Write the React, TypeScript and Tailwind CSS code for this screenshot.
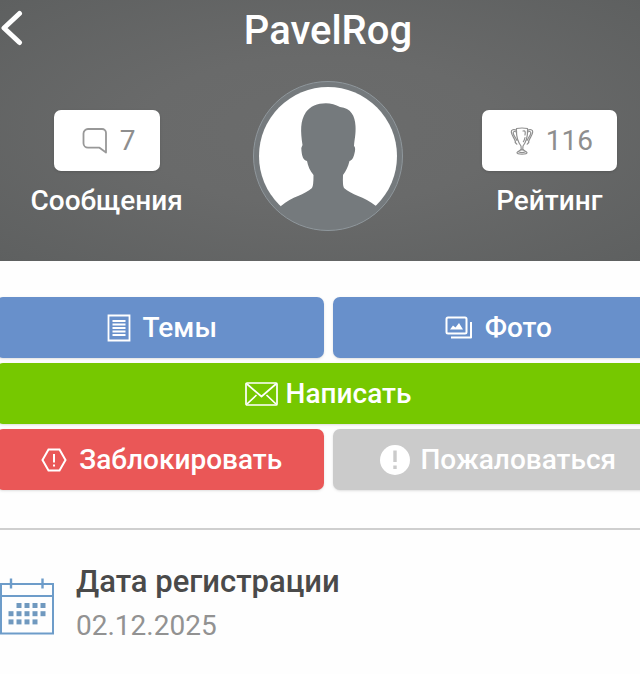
import type { ReactNode } from "react";
import clsx from "clsx";

function BackIcon() {
  return (
    <svg width="24" height="36" viewBox="0 0 24 36" fill="none" stroke="white" strokeWidth="5" strokeLinecap="round" strokeLinejoin="round">
      <path d="M19.5 3.5 4 18l15.500 14.500" />
    </svg>
  );
}

function MessageIcon() {
  return (
    <svg width="26" height="28" viewBox="0 0 26 28" fill="none" stroke="#989898" strokeWidth="1.800" strokeLinejoin="round">
      <path d="M6 2h14a4 4 0 0 1 4 4v19.500l-6.500-4.800H6a4.500 4.500 0 0 1-4.500-4.500V6.500A4.500 4.500 0 0 1 6 2z" />
    </svg>
  );
}

function TrophyIcon() {
  return (
    <svg width="24" height="28" viewBox="0 0 24 28" fill="none" stroke="#8f8f8f" strokeWidth="1.200" strokeLinejoin="round" strokeLinecap="round">
      <path d="M6.500 1.500Q12 .5 17.500 1.500C18 9 16.500 14.500 13 19l-.3 4h-1.400L11 19C7.500 14.500 6 9 6.500 1.500z" />
      <path d="M6.500 3.300C4 2 1 2.500 1.300 5c.3 4 3.500 6 4.200 10.200M5.200 15.500l1.600 1.700M6.600 5C5 4.200 3 4.200 3.200 6c.3 2.500 2.500 4.500 3.800 7.500" />
      <path d="M17.500 3.300c2.500-1.300 5.500-.8 5.200 1.700-.3 4-3.500 6-4.200 10.200M18.800 15.500l-1.600 1.700M17.400 5c1.600-.8 3.600-.8 3.400 1-.3 2.500-2.500 4.500-3.800 7.500" />
      <path d="M13 4c2.500-.8 2.500 1 2 4M15 10.500c-.3 1.500-.8 3-1.600 4.200" />
      <path d="M10.800 22.500c-.5 1.500-3.300 1.500-3.800 3.200 0 1.800 10 1.800 10 0-.5-1.700-3.300-1.700-3.800-3.200M9 25q3 1 6 0" />
    </svg>
  );
}

function TopicsIcon() {
  return (
    <svg width="24" height="28" viewBox="0 0 24 28" fill="none" stroke="white" strokeWidth="1.800">
      <path d="M1.500 1.500h21v25h-21z" />
      <path d="M5.500 7h13M5.500 10.500h13M5.500 14h13M5.500 17.500h13M5.500 21h13" />
    </svg>
  );
}

function PhotoIcon() {
  return (
    <svg width="28" height="24" viewBox="0 0 28 24" fill="none" stroke="white" strokeWidth="2">
      <rect x="1.500" y="1.500" width="20" height="16" rx="1.500" />
      <path d="M26 6v15.500H6" strokeLinejoin="round" />
      <path d="M5 13.500 8 9.500l2.500 2L14 7l4 6.500z" fill="white" stroke="none" />
    </svg>
  );
}

function MailIcon() {
  return (
    <svg width="33" height="24" viewBox="0 0 33 24" fill="none" stroke="white" strokeWidth="1.700" strokeLinejoin="round">
      <rect x="1" y="1" width="31" height="22" rx="1" />
      <path d="M2 2l14.500 12.500L31 2M2 22l9.500-9M31 22l-9.500-9" />
    </svg>
  );
}

function BlockIcon() {
  return (
    <svg width="26" height="24" viewBox="0 0 26 24" fill="none" stroke="white" strokeWidth="2">
      <path d="M7.500 1.500h11L24.500 12l-6 10.500h-11L1.500 12z" />
      <path d="M13 6v8.500M13 16.500v2" />
    </svg>
  );
}

function ComplainIcon() {
  return (
    <svg width="30" height="30" viewBox="0 0 30 30">
      <circle cx="15" cy="15" r="15" fill="white" />
      <path d="M13.300 5.500h3.400v11.500h-3.400zM13.300 20.500h3.400v3.400h-3.400z" fill="#cbcbcb" />
    </svg>
  );
}

const calendarDots = [
  [1, 0], [2, 0], [3, 0], [4, 0],
  [0, 1], [1, 1], [2, 1], [3, 1], [4, 1],
  [0, 2], [1, 2], [2, 2], [3, 2],
];

function CalendarIcon() {
  return (
    <svg width="54" height="57" viewBox="0 0 54 57" fill="none" stroke="#6d9cc9" strokeWidth="2">
      <path d="M1 6h52v49.500H1zM1 18h52" />
      <path d="M11 .5v10M42.500 .5v10" strokeWidth="2.400" />
      {calendarDots.map(([col, row]) => (
        <rect key={`${col}-${row}`} x={8.5 + col * 8} y={25 + row * 8.2} width="5" height="5" fill="#7099bf" stroke="none" />
      ))}
    </svg>
  );
}

function Avatar() {
  return (
    <svg width="150" height="150" viewBox="0 0 150 150" role="img" aria-label="PavelRog">
      <defs>
        <clipPath id="avatar-clip">
          <circle cx="75" cy="75" r="74.500" />
        </clipPath>
      </defs>
      <g clipPath="url(#avatar-clip)">
        <circle cx="75" cy="75" r="75" fill="#757a7d" />
        <circle cx="75" cy="75" r="69" fill="white" />
        <path
          d="M28 125C39 115 52 114 59 107Q60.500 105 60.500 94C57 90 55 85 54 80C50 79 49 75 48.500 70Q48 66 49.500 64C47.500 50 47 40 53 31C59 22 76 19 87 26C98 27 102 35 102.500 45C103 53 101.500 58 101 65Q102.500 66 102 70C101 75 100 79 96.500 80C95 86 93 90 90 94Q89.500 105 91 107C98 114 111 115 123 125V150H28z"
          fill="#757a7d"
        />
      </g>
      <circle cx="75" cy="75" r="74.500" fill="none" stroke="#8f979c" />
    </svg>
  );
}

function Stat({ icon, value, label }: { icon: ReactNode; value: number; label: string }) {
  return (
    <a href="#" className="flex flex-col items-center pt-[29px]">
      <span className="flex h-[61px] items-center gap-3 rounded-[7px] bg-white pr-6 pl-7 text-[28px] text-[#8e8e8e] shadow-sm">
        {icon}
        {value}
      </span>
      <span className="mt-3 text-[28px] leading-9 font-medium text-white">{label}</span>
    </a>
  );
}

function ActionButton({ icon, children, className }: { icon: ReactNode; children: ReactNode; className: string }) {
  return (
    <button
      type="button"
      className={clsx("flex h-[61px] items-center justify-center rounded-[7px] text-[28px] font-medium text-white shadow-sm", className)}
    >
      {icon}
      {children}
    </button>
  );
}

export default function App() {
  return (
    <div className="min-h-screen overflow-hidden bg-[#fefefe] font-['Roboto',sans-serif]">
      <header className="bg-[radial-gradient(ellipse_at_center,#6b6c6c_0%,#696a6a_40%,#5e6060_100%)] pb-[30px]">
        <div className="-mr-5 -ml-1 grid h-[81px] grid-cols-3 items-start">
          <button type="button" aria-label="Назад" className="mt-2.5 ml-1 justify-self-start">
            <BackIcon />
          </button>
          <h1 className="text-center text-[40px] leading-[62px] font-medium text-white">PavelRog</h1>
        </div>
        <div className="-mr-5 -ml-1 grid h-[150px] grid-cols-3">
          <Stat icon={<MessageIcon />} value={7} label="Сообщения" />
          <div className="flex justify-center">
            <Avatar />
          </div>
          <Stat icon={<TrophyIcon />} value={116} label="Рейтинг" />
        </div>
      </header>

      <main>
        <div className="-mr-5 -ml-1 grid grid-cols-2 gap-x-[9px] gap-y-[5px] pt-9 pb-[38px]">
          <ActionButton icon={<TopicsIcon />} className="gap-3 bg-[#6890cb] pl-1">
            Темы
          </ActionButton>
          <ActionButton icon={<PhotoIcon />} className="gap-3 bg-[#6890cb] pl-1">
            Фото
          </ActionButton>
          <ActionButton icon={<MailIcon />} className="col-span-2 gap-2 bg-[#76c800]">
            Написать
          </ActionButton>
          <ActionButton icon={<BlockIcon />} className="gap-3 bg-[#ea5757] pl-1">
            Заблокировать
          </ActionButton>
          <ActionButton icon={<ComplainIcon />} className="gap-2.5 bg-[#cbcbcb] pl-1">
            Пожаловаться
          </ActionButton>
        </div>

        <section className="flex items-start border-t-2 border-[#cfcfcf] pt-[34px]">
          <div className="w-[76px] pt-3.5">
            <CalendarIcon />
          </div>
          <dl>
            <dt className="text-[31px] leading-9 font-medium text-[#4a4a4a]">Дата регистрации</dt>
            <dd className="mt-2 text-[28px] leading-9 text-[#929292]">02.12.2025</dd>
          </dl>
        </section>
      </main>
    </div>
  );
}
